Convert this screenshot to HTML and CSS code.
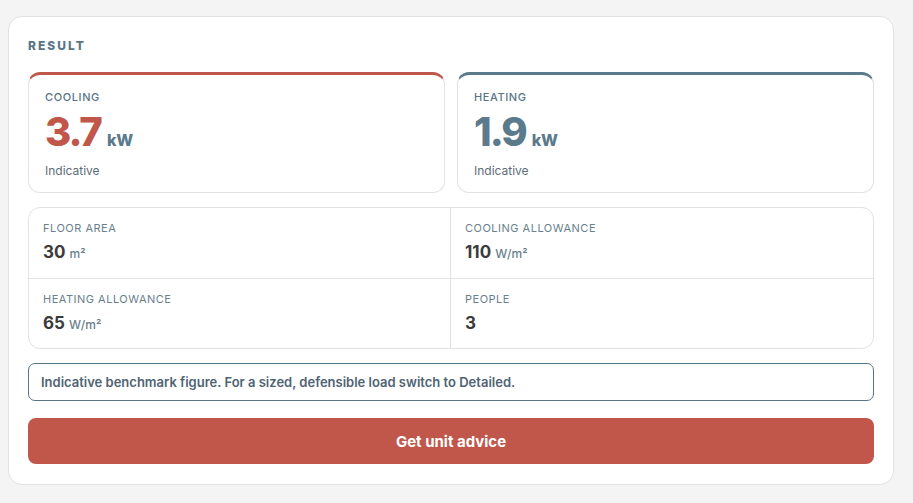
FILE: index.html
```html
<!DOCTYPE html>
<html lang="en">
<head>
    <meta charset="UTF-8">
    <meta name="viewport" content="width=device-width, initial-scale=1.0">
    <title>Load Result</title>
    <link rel="stylesheet" href="styles.css">
</head>
<body>
    <div class="panel">
        <h2 class="panel-title">Result</h2>

        <div class="loads">
            <div class="load load-cool">
                <div class="load-label">Cooling</div>
                <div class="load-value"><span class="num">3.7</span><span class="unit">kW</span></div>
                <div class="load-note">Indicative</div>
            </div>
            <div class="load load-heat">
                <div class="load-label">Heating</div>
                <div class="load-value"><span class="num">1.9</span><span class="unit">kW</span></div>
                <div class="load-note">Indicative</div>
            </div>
        </div>

        <div class="stats">
            <div class="stat">
                <div class="stat-label">Floor area</div>
                <div class="stat-value">30 <span>m²</span></div>
            </div>
            <div class="stat">
                <div class="stat-label">Cooling allowance</div>
                <div class="stat-value">110 <span>W/m²</span></div>
            </div>
            <div class="stat">
                <div class="stat-label">Heating allowance</div>
                <div class="stat-value">65 <span>W/m²</span></div>
            </div>
            <div class="stat">
                <div class="stat-label">People</div>
                <div class="stat-value">3</div>
            </div>
        </div>

        <div class="notice">Indicative benchmark figure. For a sized, defensible load switch to Detailed.</div>

        <button type="button" class="advice-btn">Get unit advice</button>
    </div>
</body>
</html>
```

FILE: styles.css
```css
body {
    margin: 0;
    padding: 16px 19px 18px 8px;
    background-color: #f4f4f4;
    font-family: Inter, "Noto Sans", sans-serif;
    color: #3b3b3b;
}
.panel {
    background: #fff;
    border: 1px solid #e2e2e2;
    border-radius: 14px;
    padding: 20px 19px 20px 19px;
}
.panel-title {
    margin: 0 0 17px;
    font-size: 12px;
    line-height: 18px;
    font-weight: 800;
    letter-spacing: 2px;
    text-transform: uppercase;
    color: #587586;
}
.loads {
    display: grid;
    grid-template-columns: 1fr 1fr;
    gap: 12px;
    margin-bottom: 14px;
}
.load {
    border: 1px solid #e2e2e2;
    border-top: 3px solid #c0574a;
    border-radius: 12px;
    padding: 14px 16px 13px;
}
.load-heat {
    border-top-color: #5b7a8c;
}
.load-label {
    font-size: 11px;
    line-height: 16px;
    font-weight: 500;
    letter-spacing: 0.6px;
    text-transform: uppercase;
    color: #587586;
}
.load-value {
    display: flex;
    align-items: baseline;
    gap: 6px;
    margin: 3px 0 7px;
}
.load-value .num {
    font-size: 40px;
    line-height: 48px;
    font-weight: 800;
    letter-spacing: -2px;
    color: #c0574a;
}
.load-heat .load-value .num {
    color: #5b7a8c;
}
.load-value .unit {
    font-size: 16px;
    font-weight: 800;
    color: #5b7a8c;
}
.load-note {
    font-size: 12px;
    line-height: 16px;
    color: #5d6d78;
}
.stats {
    display: grid;
    grid-template-columns: 1fr 1fr;
    border: 1px solid #e2e2e2;
    border-radius: 12px;
    margin-bottom: 14px;
}
.stat {
    padding: 12px 14px 14px;
    height: 43px;
}
.stat:nth-child(odd) {
    border-right: 1px solid #e2e2e2;
}
.stat:nth-child(-n+2) {
    border-bottom: 1px solid #e2e2e2;
    height: 44px;
}
.stat-label {
    font-size: 11px;
    line-height: 16px;
    letter-spacing: 0.5px;
    text-transform: uppercase;
    color: #6a7f8c;
}
.stat-value {
    margin-top: 4px;
    font-size: 17px;
    line-height: 24px;
    font-weight: 700;
    color: #3b3b3b;
}
.stat-value span {
    font-size: 12px;
    font-weight: 500;
    color: #6a7f8c;
}
.notice {
    border: 1px solid #587586;
    border-radius: 7px;
    padding: 10px 12px;
    font-size: 13px;
    line-height: 16px;
    font-weight: 600;
    color: #4f6473;
    margin-bottom: 17px;
}
.advice-btn {
    display: block;
    width: 100%;
    height: 46px;
    border: none;
    border-radius: 8px;
    background-color: #c0574a;
    color: #fff;
    font-family: Inter, sans-serif;
    font-size: 15px;
    font-weight: 700;
    cursor: pointer;
}
```
